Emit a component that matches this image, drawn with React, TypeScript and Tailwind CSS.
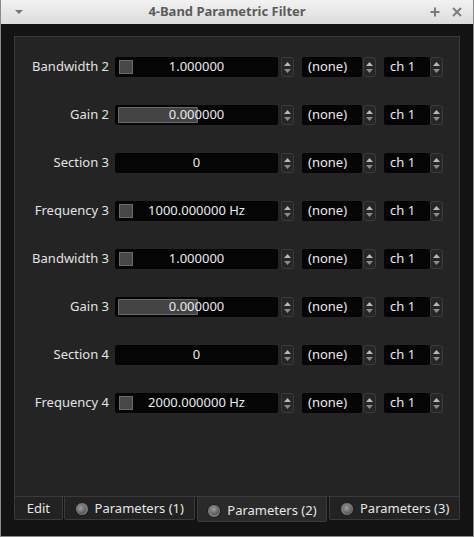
import React from "react";

type Row = {
  label: string;
  value: string;
  kind: "check" | "bar" | "plain";
};

const ROWS: Row[] = [
  { label: "Bandwidth 2", value: "1.000000", kind: "check" },
  { label: "Gain 2", value: "0.000000", kind: "bar" },
  { label: "Section 3", value: "0", kind: "plain" },
  { label: "Frequency 3", value: "1000.000000 Hz", kind: "check" },
  { label: "Bandwidth 3", value: "1.000000", kind: "check" },
  { label: "Gain 3", value: "0.000000", kind: "bar" },
  { label: "Section 4", value: "0", kind: "plain" },
  { label: "Frequency 4", value: "2000.000000 Hz", kind: "check" },
];

function Spinner() {
  return (
    <div className="flex h-[20px] w-[13px] flex-col items-center justify-center gap-[3px] rounded-[3px] border border-[#3c3c3c] bg-[#262626]">
      <svg width="7" height="4" viewBox="0 0 7 4">
        <path d="M0 4L3.5 0L7 4Z" fill="#b8b8b8" />
      </svg>
      <svg width="7" height="4" viewBox="0 0 7 4">
        <path d="M0 0L3.5 4L7 0Z" fill="#8a8a8a" />
      </svg>
    </div>
  );
}

function Radio() {
  return (
    <span className="flex h-[14px] w-[14px] items-center justify-center rounded-full border border-[#1a1a1a] bg-[#7a7a7a]">
      <span className="h-[9px] w-[9px] rounded-full bg-[radial-gradient(circle_at_40%_35%,#a0a0a0,#3a3a3a)]" />
    </span>
  );
}

function ParamRow({ row }: { row: Row }) {
  return (
    <div className="flex h-[20px] items-center">
      <div className="w-[94px] text-right text-[13px] text-[#e2e2e2]">{row.label}</div>
      <div className="ml-[6px] flex items-center gap-[3px]">
        <div className="relative flex h-[20px] w-[163px] items-center justify-center rounded-[2px] bg-[#050505]">
          {row.kind === "check" && (
            <span className="absolute left-[4px] top-[3px] h-[14px] w-[14px] border border-[#6a6a6a] bg-[#474747]" />
          )}
          {row.kind === "bar" && (
            <span className="absolute left-[3px] top-[2px] h-[16px] w-[80px] rounded-[1px] border border-[#6a6a6a] bg-[#444444]" />
          )}
          <span className="relative text-[13px] text-[#eaeaea]">{row.value}</span>
        </div>
        <Spinner />
      </div>
      <div className="ml-[8px] flex items-center gap-[1px]">
        <div className="flex h-[20px] w-[60px] items-center rounded-[2px] bg-[#050505] pl-[6px] text-[13px] text-[#eaeaea]">
          (none)
        </div>
        <Spinner />
      </div>
      <div className="ml-[8px] flex items-center">
        <div className="flex h-[20px] w-[46px] items-center rounded-[2px] bg-[#050505] pl-[6px] text-[13px] text-[#eaeaea]">
          ch 1
        </div>
        <Spinner />
      </div>
    </div>
  );
}

export default function App() {
  return (
    <div
      className="flex h-[537px] w-[474px] flex-col overflow-hidden border-x border-b border-[#8a8a8a] bg-[#131313]"
      style={{ fontFamily: '"Noto Sans", "Open Sans", sans-serif' }}
    >
      <div className="flex h-[24px] shrink-0 items-center bg-gradient-to-b from-[#f2f2f2] to-[#dcdcdc] px-[10px]">
        <svg width="12" height="12" viewBox="0 0 12 12" className="ml-[2px]">
          <path d="M2 4L10 4L6 8Z" fill="#777" />
        </svg>
        <div className="flex-1 text-center text-[13px] font-bold text-[#5c5c5c]">4-Band Parametric Filter</div>
        <svg width="12" height="12" viewBox="0 0 12 12" className="mr-[10px]">
          <path d="M6 1.5V10.5M1.5 6H10.5" stroke="#7a7a7a" strokeWidth="2" />
        </svg>
        <svg width="12" height="12" viewBox="0 0 12 12">
          <path d="M2 2L10 10M10 2L2 10" stroke="#7a7a7a" strokeWidth="1.8" />
        </svg>
      </div>

      <div className="flex flex-1 flex-col px-[13px] pt-[12px] pb-[14px]">
        <div className="flex flex-1 flex-col gap-[28px] border border-[#3a3a3a] bg-[#242424] pt-[20px]">
          {ROWS.map((row, i) => (
            <ParamRow key={i} row={row} />
          ))}
        </div>

        <div className="flex h-[25px] items-start text-[13px] text-[#e6e6e6]">
          <div className="flex h-[23px] w-[49px] items-center justify-center rounded-b-[2px] border border-t-0 border-[#3a3a3a] bg-[#222222] pt-[2px]">
            Edit
          </div>
          <div className="ml-[1px] flex h-[23px] w-[131px] items-center justify-center gap-[6px] rounded-b-[2px] border border-t-0 border-[#3a3a3a] bg-[#222222] pt-[2px]">
            <Radio />
            Parameters (1)
          </div>
          <div className="ml-[2px] flex h-[25px] w-[131px] items-center justify-center gap-[6px] rounded-b-[2px] border border-t-0 border-[#3a3a3a] bg-[#2a2a2a] pt-[3px]">
            <Radio />
            Parameters (2)
          </div>
          <div className="ml-[2px] flex h-[23px] w-[131px] items-center justify-center gap-[6px] rounded-b-[2px] border border-t-0 border-[#3a3a3a] bg-[#222222] pt-[2px]">
            <Radio />
            Parameters (3)
          </div>
        </div>
      </div>
    </div>
  );
}
